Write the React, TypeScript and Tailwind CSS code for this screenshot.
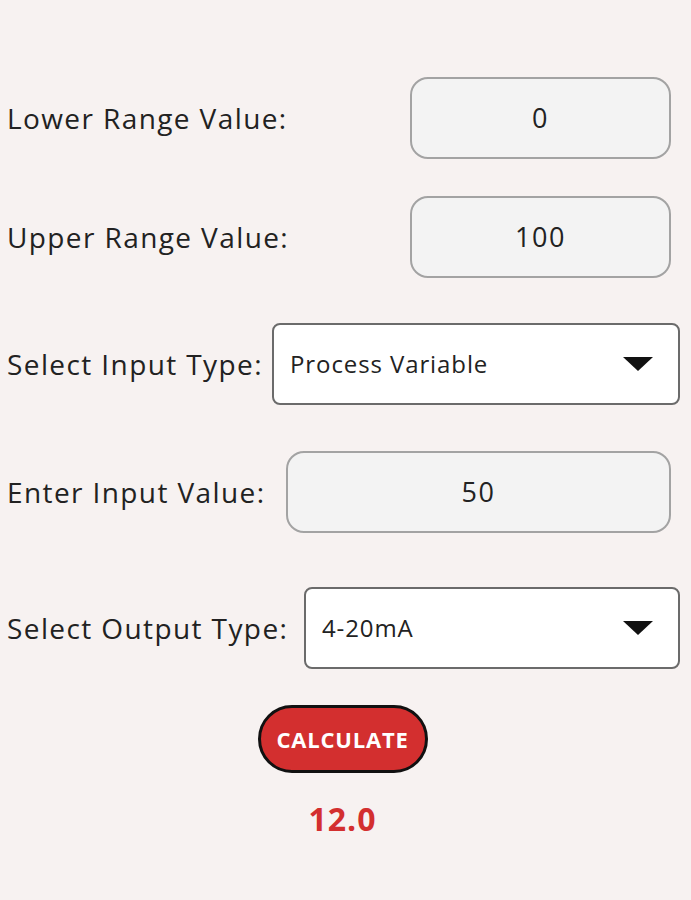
import React from "react";

const font = { fontFamily: '"Open Sans", "Noto Sans", sans-serif' };

const ValueBox: React.FC<{ value: string; className?: string }> = ({ value, className }) => (
  <div
    className={`flex h-[82px] items-center justify-center rounded-[18px] border-2 border-[#a3a3a3] bg-[#f3f3f3] text-[27px] tracking-[1.5px] text-[#222] ${className ?? ""}`}
  >
    {value}
  </div>
);

const SelectBox: React.FC<{ value: string; className?: string }> = ({ value, className }) => (
  <div
    className={`flex h-[82px] items-center justify-between rounded-[8px] border-2 border-[#6b6b6b] bg-white pl-[16px] pr-[25px] text-[24px] tracking-[0.9px] text-[#222] ${className ?? ""}`}
  >
    <span>{value}</span>
    <svg width="30" height="14" viewBox="0 0 30 14">
      <polygon points="0,0 30,0 15,14" fill="#111" />
    </svg>
  </div>
);

export default function App() {
  return (
    <div className="min-h-[900px] w-[691px] bg-[#f7f2f1] pt-[77px] text-[#222]" style={font}>
      <div className="flex items-center pl-[7px] pr-[20px] text-[28px] tracking-[1.4px]">
        <span>Lower Range Value:</span>
        <ValueBox value="0" className="ml-auto w-[261px]" />
      </div>

      <div className="mt-[37px] flex items-center pl-[7px] pr-[20px] text-[28px] tracking-[1.4px]">
        <span>Upper Range Value:</span>
        <ValueBox value="100" className="ml-auto w-[261px]" />
      </div>

      <div className="mt-[45px] flex items-center pl-[7px] pr-[11px] text-[28px] tracking-[1.4px]">
        <span className="w-[265px] shrink-0 whitespace-nowrap">Select Input Type:</span>
        <SelectBox value="Process Variable" className="flex-1" />
      </div>

      <div className="mt-[46px] flex items-center pl-[7px] pr-[20px] text-[28px] tracking-[1.4px]">
        <span className="w-[279px] shrink-0 whitespace-nowrap">Enter Input Value:</span>
        <ValueBox value="50" className="flex-1" />
      </div>

      <div className="mt-[54px] flex items-center pl-[7px] pr-[11px] text-[28px] tracking-[1.4px]">
        <span className="w-[297px] shrink-0 whitespace-nowrap">Select Output Type:</span>
        <SelectBox value="4-20mA" className="flex-1" />
      </div>

      <div className="mt-[36px] flex flex-col items-center pr-[6px]">
        <button className="flex h-[68px] w-[170px] items-center justify-center rounded-full border-[3px] border-[#111] bg-[#d32f2f] text-[22px] font-bold tracking-[0.8px] text-white">
          CALCULATE
        </button>
        <div className="mt-[22px] text-[32px] font-bold tracking-[1px] text-[#d32f2f]">12.0</div>
      </div>
    </div>
  );
}
